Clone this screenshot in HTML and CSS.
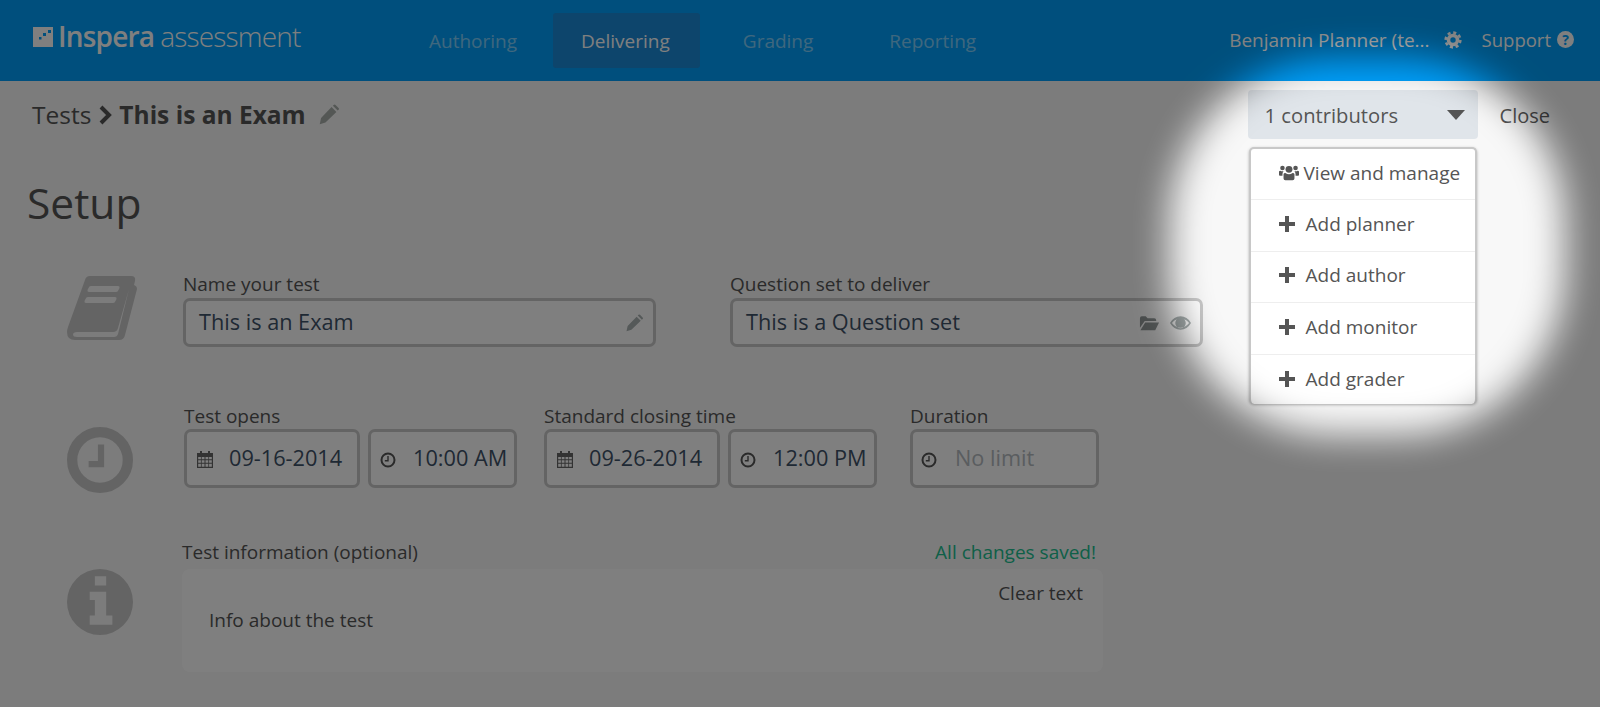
FILE: index.html
```html
<!DOCTYPE html>
<html>
<head>
  <title>Inspera assessment</title>
  <link rel="stylesheet" href="styles.css">
</head>
<body>
  <svg class="defs" width="0" height="0">
    <symbol id="i-plus" viewBox="0 0 16 16"><path d="M6 0h4v6h6v4h-6v6H6v-6H0V6h6z"/></symbol>
    <symbol id="i-cal" viewBox="0 0 18 18"><path fill-rule="evenodd" d="M1 3h3V1h2v2h6V1h2v2h3v15H1zM2.200 7v2.300h2.700V7zm3.500 0v2.300h2.800V7zm3.800 0v2.300h2.800V7zm3.600 0v2.300h2.700V7zM2.200 10.300v2.400h2.700v-2.400zm3.500 0v2.400h2.800v-2.400zm3.800 0v2.400h2.800v-2.400zm3.600 0v2.400h2.700v-2.400zM2.200 13.700v3.100h2.700v-3.100zm3.500 0v3.100h2.800v-3.100zm3.800 0v3.100h2.800v-3.100zm3.600 0v3.100h2.700v-3.100z"/></symbol>
    <symbol id="i-clock" viewBox="0 0 16 16"><circle cx="8" cy="8" r="6.500" fill="none" stroke="currentColor" stroke-width="2"/><path d="M8 4v4.800H4.800" fill="none" stroke="currentColor" stroke-width="1.400"/></symbol>
    <symbol id="i-pencil" viewBox="0 0 24 24"><path d="M2 23l1.500-7L15.500 3.500l5.500 5.500L8.500 21zM17 2l1-1q1-1 2 0l3.500 3.500q1 1 0 2l-1 1z"/></symbol>
  </svg>

  <header class="topbar">
    <div class="logo">
      <svg class="logo-mark" viewBox="0 0 20 20"><path fill-rule="evenodd" d="M0 0h20v20H0zM15 3h3v3h-3zM10 6h3v3h-3zM6 10h2.500v2.500H6z"/></svg>
      <span class="logo-bold">Inspera</span>
      <span class="logo-light">assessment</span>
    </div>
    <nav class="mainnav">
      <a class="nav-item first">Authoring</a>
      <a class="nav-item active">Delivering</a>
      <a class="nav-item">Grading</a>
      <a class="nav-item last">Reporting</a>
    </nav>
    <div class="usermenu">
      <span class="username">Benjamin Planner (te...</span>
      <svg class="gear" viewBox="0 0 20 20"><circle cx="10" cy="10" r="5" fill="none" stroke="currentColor" stroke-width="4"/><circle cx="10" cy="10" r="8.200" fill="none" stroke="currentColor" stroke-width="2.800" stroke-dasharray="3.400 3.040"/></svg>
      <span class="support">Support</span>
      <span class="help">?</span>
    </div>
  </header>

  <div class="subbar">
    <div class="crumbs">
      <span>Tests</span>
      <svg class="chevron" viewBox="0 0 14 20"><path d="M3 2l8 8-8 8" fill="none" stroke="currentColor" stroke-width="4"/></svg>
      <strong>This is an Exam</strong>
      <svg class="crumb-pencil"><use href="#i-pencil"/></svg>
    </div>
    <div class="subbar-right">
      <div class="contrib">
        <button class="contrib-btn"><span>1 contributors</span><i class="caret"></i></button>
        <ul class="dropdown">
          <li class="manage">
            <svg class="users" viewBox="0 0 22 18"><circle cx="11" cy="5" r="3.800"/><circle cx="3.800" cy="3.500" r="2.500"/><circle cx="18.200" cy="3.500" r="2.500"/><path d="M5 10.500q0-1.500 2-1.500 2 1.500 4 1.500T15 9q2 0 2 1.500V15q0 2-2 2H7q-2 0-2-2zM0 7.500Q0 6.500 1.500 6.500 3 7.500 5 7q-1.200 1.200-1.200 3.500v1.500H1q-1 0-1-1zM22 7.500q0-1-1.500-1Q19 7.500 17 7q1.200 1.200 1.200 3.500v1.500H21q1 0 1-1z"/></svg>
            <span>View and manage</span>
          </li>
          <li><svg class="plus"><use href="#i-plus"/></svg><span>Add planner</span></li>
          <li><svg class="plus"><use href="#i-plus"/></svg><span>Add author</span></li>
          <li><svg class="plus"><use href="#i-plus"/></svg><span>Add monitor</span></li>
          <li><svg class="plus"><use href="#i-plus"/></svg><span>Add grader</span></li>
        </ul>
      </div>
      <a class="close-link">Close</a>
    </div>
  </div>

  <main class="content">
    <h1>Setup</h1>

    <section class="row row-name">
      <svg class="row-icon" viewBox="0 0 70 64"><path d="M18 4q1-4 5-4h41q5 0 4 5l-1 4q3 1 3 4l-12 46q-1 5-6 5H8q-8 0-8-8 0-2 1-5zM62 13L51 52q-1 4-5 4H10q-4 0-4 2.500T10 61h37q3 0 4-3z"/><path class="cut" d="M24 10h27q2 0 1.500 2l-1 2q-.5 2-2.500 2H22q-2 0-1.500-2l1-2q.5-2 2.500-2zM21 21h27q2 0 1.500 2l-1 2q-.5 2-2.500 2H19q-2 0-1.500-2l1-2q.5-2 2.500-2z"/></svg>
      <div class="fields fields-name">
        <label class="field wide">
          <span class="field-label">Name your test</span>
          <span class="input">
            <span class="value">This is an Exam</span>
            <svg class="input-icon pen"><use href="#i-pencil"/></svg>
          </span>
        </label>
        <label class="field wide">
          <span class="field-label">Question set to deliver</span>
          <span class="input">
            <span class="value">This is a Question set</span>
            <svg class="input-icon folder" viewBox="0 0 22 16"><path d="M1 3q0-2 2-2h4l2 2h7q2 0 2 2v1H6L1 13zM6.500 7.500H21l-4 8H1.500z"/></svg>
            <svg class="input-icon eye" viewBox="0 0 22 16"><path fill-rule="evenodd" d="M0 8q4-7 11-7t11 7q-4 7-11 7T0 8zm2 0q4 5 9 5t9-5q-2-3-5-4 1.500 2 1.500 4a5.500 5.500 0 0 1-11 0q0-2 1.500-4-3 1-5 4z"/><circle cx="11" cy="7.800" r="3.500"/></svg>
          </span>
        </label>
      </div>
    </section>

    <section class="row row-time">
      <svg class="row-icon" viewBox="0 0 64 64"><circle cx="32" cy="32" r="27" fill="none" stroke="currentColor" stroke-width="10"/><path d="M30 17h6v22H21v-6h9z"/></svg>
      <div class="fields fields-time">
        <div class="field">
          <span class="field-label">Test opens</span>
          <div class="pair">
            <span class="input date"><svg class="small-icon"><use href="#i-cal"/></svg><span class="value">09-16-2014</span></span>
            <span class="input time"><svg class="small-icon clock"><use href="#i-clock"/></svg><span class="value">10:00 AM</span></span>
          </div>
        </div>
        <div class="field">
          <span class="field-label">Standard closing time</span>
          <div class="pair">
            <span class="input date"><svg class="small-icon"><use href="#i-cal"/></svg><span class="value">09-26-2014</span></span>
            <span class="input time"><svg class="small-icon clock"><use href="#i-clock"/></svg><span class="value">12:00 PM</span></span>
          </div>
        </div>
        <div class="field field-duration">
          <span class="field-label">Duration</span>
          <span class="input duration"><svg class="small-icon clock"><use href="#i-clock"/></svg><span class="value placeholder">No limit</span></span>
        </div>
      </div>
    </section>

    <section class="row row-info">
      <svg class="row-icon" viewBox="0 0 64 64"><path fill-rule="evenodd" d="M32 0a32 32 0 1 1 0 64 32 32 0 0 1 0-64zM27 7v9h11V7zM22 22v8h5v15h-5v9h22v-9h-6V22z"/></svg>
      <div class="info-col">
        <div class="info-head">
          <span class="field-label">Test information (optional)</span>
          <span class="saved">All changes saved!</span>
        </div>
        <div class="info-box">
          <a class="clear-text">Clear text</a>
          <p>Info about the test</p>
        </div>
      </div>
    </section>
  </main>

  <!-- dimmed page with a soft spotlight on the dropdown -->
  <div class="dimmer"><div class="spotlight"></div></div>
</body>
</html>
```

FILE: styles.css
```css
* {
  box-sizing: border-box;
}

html, body {
  height: 100%;
}

body {
  margin: 0;
  overflow: hidden;
  background: #f8f8f8;
  color: #555;
  font-family: "Open Sans", sans-serif;
  position: relative;
}

svg {
  display: block;
  fill: currentColor;
  flex: none;
}

.defs {
  position: absolute;
}

/* top bar */
.topbar {
  height: 81px;
  background: #009ffa;
  color: #fff;
  display: flex;
  align-items: center;
  padding: 0 26px 0 33px;
}

.logo {
  display: flex;
  align-items: center;
  width: 368px;
  color: #fff;
  font-size: 28px;
  letter-spacing: -0.8px;
  margin-top: -9px;
}

.logo-mark {
  width: 20px;
  height: 20px;
  margin-right: 5px;
  margin-top: 2px;
  color: #fff;
}

.logo-bold {
  font-weight: 600;
  margin-right: 6px;
}

.logo-light {
  font-weight: 300;
}

.mainnav {
  display: flex;
  gap: 17px;
  font-size: 19px;
}

.nav-item {
  display: block;
  height: 55px;
  line-height: 57px;
  padding: 0 28px;
  border-radius: 3px;
  color: rgba(255, 255, 255, .5);
}

.nav-item.first {
  margin-right: -9px;
}

.nav-item.last {
  margin-left: 3px;
}

.nav-item.active {
  background: #1a8ad8;
  color: #fff;
  padding-right: 30px;
  margin-right: -2px;
}

.usermenu {
  margin-left: auto;
  display: flex;
  align-items: center;
  font-size: 19px;
  margin-top: -2px;
}

.username {
  font-weight: 500;
}

.support {
  font-size: 18.500px;
}

.gear {
  width: 18px;
  height: 18px;
  margin: 0 20px 0 14px;
}

.help {
  width: 17px;
  height: 17px;
  margin-left: 6px;
  border-radius: 50%;
  background: #fff;
  color: #009ffa;
  font-size: 14px;
  font-weight: 700;
  line-height: 17px;
  text-align: center;
}

/* breadcrumb line */
.subbar {
  display: flex;
  justify-content: space-between;
  padding: 9px 50px 0 32px;
  height: 66px;
}

.crumbs {
  display: flex;
  align-items: center;
  height: 49px;
  font-size: 24.500px;
}

.chevron {
  width: 14px;
  height: 20px;
  margin: 0 7px;
}

.crumbs strong {
  font-weight: 700;
}

.crumb-pencil {
  width: 21px;
  height: 21px;
  margin-left: 12px;
  color: #a8aeaa;
}

.subbar-right {
  display: flex;
  align-items: flex-start;
  gap: 22px;
  position: relative;
  z-index: 2;
}

.contrib {
  position: relative;
}

.contrib-btn {
  display: flex;
  align-items: center;
  justify-content: space-between;
  width: 230px;
  height: 49px;
  padding: 0 13px 0 17px;
  border: 0;
  border-radius: 4px;
  background: #e0e5ea;
  color: #555;
  font-family: inherit;
  font-size: 20.200px;
}

.caret {
  border-top: 10px solid #555;
  border-left: 9px solid transparent;
  border-right: 9px solid transparent;
}

.close-link {
  line-height: 49px;
  padding-top: 1px;
  font-size: 20px;
}

/* dropdown menu */
.dropdown {
  position: absolute;
  top: 57px;
  left: 1px;
  width: 228px;
  height: 257px;
  margin: 0;
  padding: 0;
  list-style: none;
  background: #fff;
  border: 2px solid #c8c8c8;
  border-bottom: 0;
  border-radius: 5px;
  box-shadow: 0 1px 3px rgba(0, 0, 0, .3);
  font-size: 19px;
  color: #555;
}

.dropdown li {
  display: flex;
  align-items: center;
  gap: 11px;
  height: 51.500px;
  padding: 0 0 3px 28px;
  border-bottom: 1px solid #eee;
}

.dropdown li:last-child {
  border-bottom: 0;
}

.dropdown .manage {
  gap: 5px;
  height: 51px;
}

.users {
  width: 20px;
  height: 20px;
}

.plus {
  width: 16px;
  height: 16px;
}

/* main form */
.content {
  padding-left: 27px;
}

h1 {
  margin: 0;
  padding-top: 28px;
  font-size: 42.500px;
  font-weight: 400;
  line-height: 56px;
  height: 129px;
  color: #555;
}

.row {
  display: flex;
  align-items: flex-start;
}

.row-icon {
  width: 70px;
  height: 64px;
  margin: 0 46px 0 40px;
  color: #c8c8c8;
}

.cut {
  fill: #f8f8f8;
}

.row-time {
  margin-top: 61px;
}

.row-time .row-icon {
  width: 66px;
  height: 66px;
  margin: 19px 47px 0 40px;
}

.row-info {
  margin-top: 57px;
}

.row-info .row-icon {
  width: 66px;
  height: 66px;
  margin: 19px 49px 0 40px;
}

.fields {
  display: flex;
  margin-top: -4px;
}

.fields-name {
  gap: 74px;
}

.fields-name .input {
  margin-top: 2px;
}

.fields-time {
  gap: 27px;
  margin-left: 4px;
}

.fields-time .pair {
  margin-top: 1px;
}

.fields-time .duration {
  margin-top: 1px;
}

.field-duration {
  margin-left: 6px;
}

.field {
  display: flex;
  flex-direction: column;
}

.field-label {
  font-size: 19px;
  line-height: 24px;
  color: #555;
}

.pair {
  display: flex;
  gap: 8px;
}

.input {
  display: flex;
  align-items: center;
  height: 49px;
  padding-left: 13px;
  border: 3px solid #c8c8c8;
  border-radius: 7px;
  background: #fff;
}

.field.wide .input {
  width: 473px;
}

.value {
  font-size: 21.700px;
  color: #3e5268;
  margin-top: -2px;
}

.field.wide .value {
  flex: 1;
}

.input-icon {
  color: #aab2b2;
}

.pen {
  width: 18px;
  height: 18px;
  margin-right: 10px;
}

.folder {
  width: 21px;
  height: 16px;
  margin-right: 10px;
  color: #909696;
}

.eye {
  width: 21px;
  height: 16px;
  margin-right: 9px;
}

.input.date,
.input.time,
.input.duration {
  height: 59px;
  padding-left: 9px;
}

.input.date {
  width: 176px;
}

.input.time {
  width: 149px;
  padding-left: 9px;
}

.input.duration {
  width: 189px;
  padding-left: 8px;
}

.small-icon {
  width: 18px;
  height: 18px;
  color: #666;
  margin-right: 15px;
}

.small-icon.clock {
  width: 16px;
  height: 16px;
  margin-right: 17px;
  margin-top: 2px;
  color: #555;
}

.input.duration .small-icon {
  margin-right: 18px;
}

.placeholder {
  color: #b4bac0;
}

.info-col {
  width: 921px;
  margin-top: -10px;
}

.info-head {
  display: flex;
  justify-content: space-between;
  padding-right: 7px;
}

.saved {
  font-size: 19px;
  line-height: 24px;
  color: #20c090;
}

.info-box {
  position: relative;
  height: 103px;
  margin-top: 5px;
  padding: 12px 20px 0 27px;
  background: #fff;
  border-radius: 8px;
}

.clear-text {
  display: block;
  text-align: right;
  font-size: 19px;
  line-height: 24px;
}

.info-box p {
  margin: 3px 0 0;
  font-size: 19px;
  line-height: 24px;
}

/* the hole is the inside of a very thick blurred border */
.dimmer {
  position: absolute;
  inset: 0;
  z-index: 5;
  overflow: hidden;
  pointer-events: none;
}

.spotlight {
  position: absolute;
  left: -830px;
  top: -1942px;
  width: 4395px;
  height: 4377px;
  border: 2000px solid rgba(0, 0, 0, .5);
  border-radius: 2165px;
  filter: blur(18px);
}
```
